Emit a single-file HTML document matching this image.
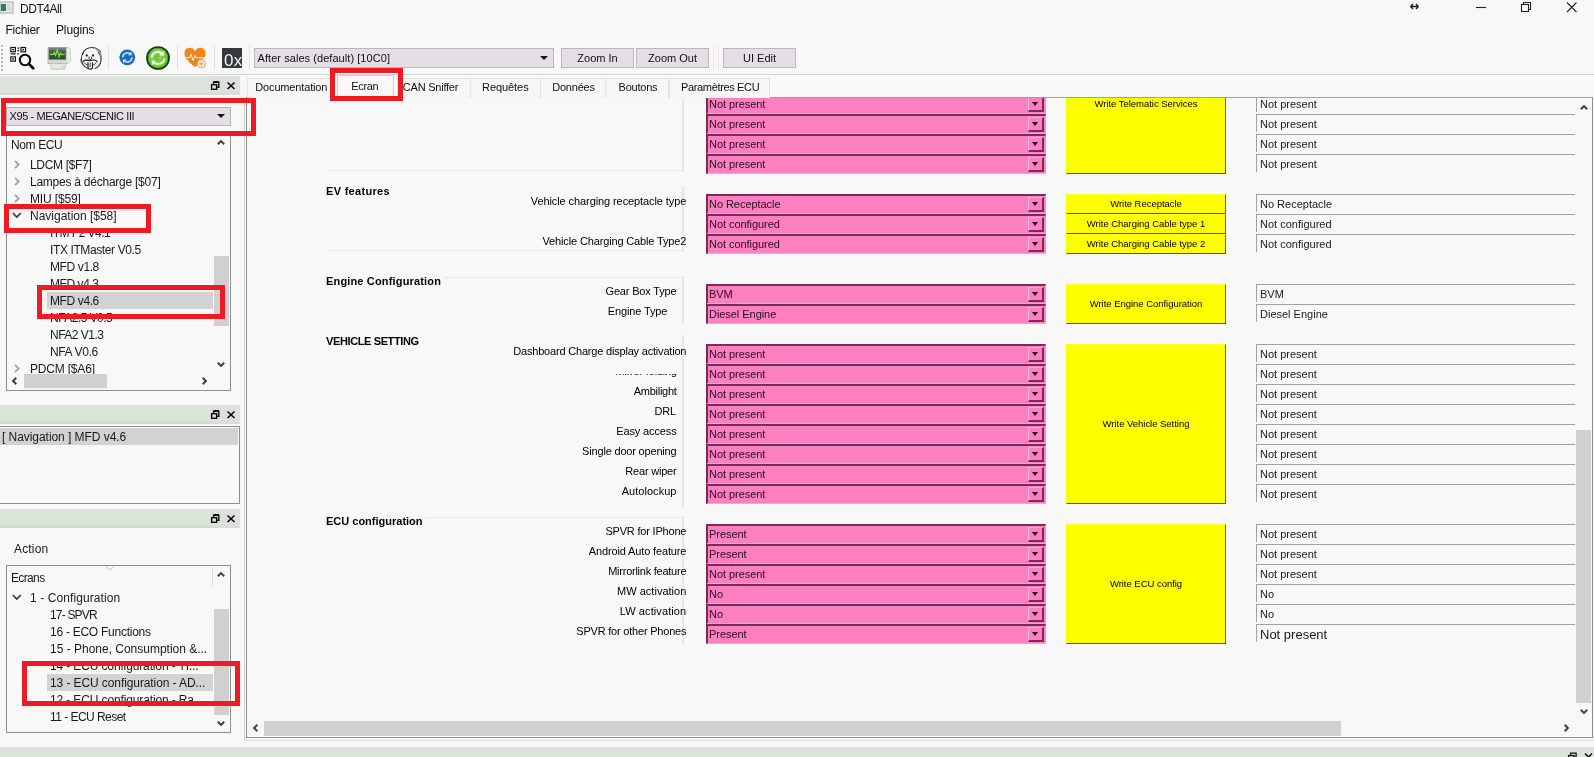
<!DOCTYPE html>
<html lang="fr"><head><meta charset="utf-8"><title>DDT4All</title>
<style>
*{box-sizing:border-box;margin:0;padding:0}
html,body{width:1594px;height:757px;overflow:hidden;background:#f8f8f8}
body{position:relative;font-family:"Liberation Sans",sans-serif;font-size:12px;color:#111;will-change:transform}
.a{position:absolute;white-space:nowrap}
.t{position:absolute;white-space:nowrap;line-height:14px;height:14px}
.ui{font-size:12px;letter-spacing:-0.1px;color:#1a1a1a}
.tab{position:absolute;top:78px;height:20px;border:1px solid #e2e2e2;border-bottom:none;background:#f6f6f6}
.tabt{font-size:11px;color:#111}
.dock{position:absolute;left:0;width:240px;height:19px;background:linear-gradient(90deg,rgba(0,0,0,0) 0 205px,rgba(222,222,222,0.7) 215px 240px),linear-gradient(#dbe4d9 0 16px,#d0d7cf 18px,#d9ded8 19px)}
.pc{position:absolute;left:706px;width:340px;height:20px;background:#ff80c0;border-top:2px solid #7c2a5a;border-left:2px solid #7c2a5a;border-bottom:1px solid #ffa3d3;border-right:1px solid #ff90c8}
.pc span{position:absolute;left:1px;top:1px;font-size:11px;line-height:14px;color:#2a0a1c;letter-spacing:-0.05px}
.pc i{position:absolute;right:1px;top:1px;width:16px;height:15px;border-top:1px solid #ffb8dc;border-left:1px solid #ffb8dc;border-right:2px solid #7c2a5a;border-bottom:2px solid #7c2a5a;background:#ff80c0}
.pc i:after{content:"";position:absolute;left:3px;top:4px;border-left:3.5px solid transparent;border-right:3.5px solid transparent;border-top:4px solid #200010}
.yb{position:absolute;left:1066px;width:160px;background:#ffff00;border-top:1px solid #ffff30;border-left:1px solid #ffff00;border-right:1px solid #6a6a00;border-bottom:1px solid #5a5a00;font-size:9.5px;color:#000;text-align:center;letter-spacing:-0.03px}
.yb span{position:absolute;left:0;right:0;text-align:center;line-height:12px}
.rf{position:absolute;left:1256px;width:319px;height:20px;border-top:1px solid #a2a2a2}
.rf:before{content:"";position:absolute;left:0;top:0;width:1px;height:17px;background:#a2a2a2}
.rf span{position:absolute;left:4px;top:2px;font-size:11px;line-height:14px;color:#1a1a1a}
.lb{position:absolute;font-size:11px;line-height:14px;height:14px;white-space:nowrap;color:#000}
.gh{position:absolute;left:326px;font-size:11px;font-weight:bold;line-height:14px;white-space:nowrap;color:#000;background:#f8f8f8;padding-right:3px}
.gl{position:absolute;background:#e9e4ee}
.red{position:absolute;border:5px solid #ed1c24}
.tv{position:absolute;border:1px solid #8e8e8e;background:#f8f8f8;overflow:hidden}
.sel{position:absolute;background:#d2d2d2}
.sb{position:absolute;background:#d0d0d0}
svg{position:absolute;overflow:visible}
</style></head><body>

<svg style="left:0;top:1px" width="14" height="14" viewBox="0 0 14 14"><rect x="0" y="1" width="13" height="11" fill="#e8ece8" stroke="#9aa" stroke-width="1"/><rect x="1" y="3" width="5" height="7" fill="#3a7a5a"/><rect x="7" y="3" width="4" height="7" fill="#d8dcd8"/></svg>
<div class="t" style="left:20px;top:2px;font-size:12px;color:#111;letter-spacing:-0.453px">DDT4All</div>
<svg style="left:1400px;top:0" width="194" height="16" viewBox="0 0 194 16" fill="none" stroke="#222" stroke-width="1.1"><path d="M10.5 6.5h8M10.5 6.5l2.5-2.5M10.5 6.5l2.500 2.500M18.5 6.500l-2.500-2.500M18.500 6.500l-2.500 2.500" stroke-width="1.4"/><path d="M76 7.5h10"/><rect x="121.500" y="4.500" width="7" height="7"/><path d="M123.500 4.500v-2h7v7h-2"/><path d="M167 2.500l9.500 9.500M176.500 2.500l-9.500 9.500"/></svg>
<div class="t" style="left:5.500px;top:23px;font-size:12px;letter-spacing:-0.274px">Fichier</div>
<div class="t" style="left:56px;top:23px;font-size:12px;letter-spacing:-0.137px">Plugins</div>
<div class="a" style="left:1px;top:45px;width:2px;height:26px;background:repeating-linear-gradient(#b4b4b4 0 2px,transparent 2px 4px)"></div>
<svg style="left:9px;top:45px" width="27" height="26" viewBox="0 0 27 26"><g fill="none" stroke="#111" stroke-width="1.150"><rect x="1.800" y="2.500" width="4.600" height="4.300"/><rect x="12" y="2.500" width="4.600" height="4.300"/><rect x="1.800" y="11.900" width="4.600" height="4.300"/></g><g fill="#111"><rect x="3.300" y="3.900" width="1.600" height="1.500"/><rect x="13.500" y="3.900" width="1.600" height="1.500"/><rect x="3.300" y="13.300" width="1.600" height="1.500"/><rect x="8.600" y="2.400" width="1.500" height="1.400"/><rect x="8.600" y="4.800" width="1.500" height="1.600"/><rect x="1.600" y="8.300" width="5" height="1.200"/><rect x="8.200" y="8.300" width="1.600" height="1.200"/></g><circle cx="16" cy="15" r="5.200" fill="#f8f8f8" stroke="#0a0a0a" stroke-width="2"/><path d="M20 19l4.200 4.200" stroke="#0a0a0a" stroke-width="2.700" stroke-linecap="round"/></svg>
<svg style="left:47px;top:46px" width="25" height="24" viewBox="0 0 25 24"><defs><linearGradient id="scr" x1="0" y1="0" x2="0" y2="1"><stop offset="0" stop-color="#8a8f8a"/><stop offset="0.350" stop-color="#3c5a3c"/><stop offset="1" stop-color="#2c4a30"/></linearGradient></defs><path d="M1 1.500h19.500l3 1.500v12l-3 2.500h-19.500z" fill="#d4d7d4" stroke="#a0a3a0" stroke-width="0.700"/><path d="M20 1.500l3.500 1.500v12l-3.500 2.500z" fill="#e9ebe9"/><rect x="2" y="2" width="16.800" height="11.300" fill="url(#scr)" stroke="#6a6e6a" stroke-width="0.700"/><path d="M3 8.300h3l1.200-1.800 1.300 2.800 1.800-5.300 1.700 6.800 1.400-3.800 1 1.300h3.400" fill="none" stroke="#7fe34a" stroke-width="1.200"/><path d="M3.500 17.500h15.500l-1 5.800h-13.500z" fill="#e6e8e6" stroke="#b4b7b4" stroke-width="0.700"/><path d="M15 23.300l3-3.300h-3z" fill="#cfd2cf"/></svg>
<svg style="left:79px;top:46px" width="25" height="25" viewBox="0 0 25 25" fill="none" stroke="#2a2a2a" stroke-width="1.100" stroke-linecap="round"><path d="M4.500 6.500c-2.500 3.500-2.800 8.500-0.500 12 1.500 2.300 3.500 3.500 5 4"/><path d="M16 22.500c3-1 5.500-4 6-8 0.300-3-0.500-6-2.500-8"/><path d="M3.500 8c1.500-4 5.500-6.500 9.500-6.500 3.500 0 6.500 1.500 8.500 4.500" stroke="#333"/><path d="M14 2c3 0 6 2 8 5.500M17 3.500c2.500 1.500 4.500 4.500 5 7.500M1.500 13c0 2 0.500 4 1.500 5.500M19.500 5c2 2 3.500 5 3.500 8" stroke="#8a8a8a" stroke-width="0.900"/><circle cx="7.700" cy="9.500" r="1.150" fill="#222" stroke="none"/><circle cx="14" cy="9.500" r="1.150" fill="#222" stroke="none"/><path d="M10 11c-0.500 1.500 0.500 2.500 1.300 2.500s1.800-1 1.200-2.500" stroke-width="1"/><path d="M4 15.500c1.500-1.500 3.500-1.800 5.500-1.200 1 0.300 1.500 0.300 2.500 0 2-0.600 4.500-0.300 6 1.200" stroke-width="1.300"/><path d="M5.500 17c1 1.500 2.500 2 3.500 2M17 17c-1 1.500-2 2-3 2" stroke-width="1"/><path d="M9 16.500v4.500c0 2.800 4.500 2.800 4.500 0v-4.500" stroke-width="1.200"/><path d="M11.200 17v3.500" stroke-width="0.900"/></svg>
<div class="a" style="left:108px;top:46px;width:1px;height:24px;background:#e4e0e6"></div>
<svg style="left:119px;top:49px" width="17" height="17" viewBox="0 0 17 17"><circle cx="8.300" cy="8.300" r="7.900" fill="#1a6cc4"/><path d="M3.700 8.300a4.600 4.600 0 0 1 8-3M12.900 8.500a4.600 4.600 0 0 1-8 3" fill="none" stroke="#cfe9ff" stroke-width="1.500"/><path d="M12.600 2.600v3.600h-3.600zM4 14.200v-3.600h3.600z" fill="#cfe9ff"/></svg>
<svg style="left:146px;top:46px" width="24" height="24" viewBox="0 0 24 24"><defs><radialGradient id="gg" cx="0.450" cy="0.350" r="0.750"><stop offset="0" stop-color="#a4e070"/><stop offset="0.550" stop-color="#6cc83a"/><stop offset="1" stop-color="#8fd830"/></radialGradient></defs><circle cx="12" cy="12" r="11" fill="url(#gg)" stroke="#123808" stroke-width="1.700"/><circle cx="12" cy="12" r="9.600" fill="none" stroke="#4aa52a" stroke-width="1"/><path d="M5.500 11.500a6.500 6.500 0 0 1 11-3.500M18.500 12.500a6.500 6.500 0 0 1-11 3.500" fill="none" stroke="#f2ffe6" stroke-width="2"/><path d="M18.200 4.500v5h-5zM5.800 19.500v-5h5z" fill="#f2ffe6"/><path d="M8 10c1-2 3-3 5-2.500l1 3-2 1 1 2.500-3 2c-1.500-1-2.500-3.500-2-6z" fill="#6ac030" opacity="0.850"/></svg>
<div class="a" style="left:177px;top:46px;width:1px;height:24px;background:#e4e0e6"></div>
<svg style="left:184px;top:48px" width="23" height="21" viewBox="0 0 23 21"><path d="M11 19C4 13.500 0.500 10 0.500 6a5 5 0 0 1 10.500-2 5 5 0 0 1 10.500 2c0 4-3.500 7.500-10.500 13z" fill="#f08418"/><path d="M1 9.800h4.500l1.500-3.800 2 6.500 2-5 1 2.300h8.500" fill="none" stroke="#fff" stroke-width="1"/><circle cx="17.300" cy="15.800" r="4" fill="#fbeee0" stroke="#f2a55c" stroke-width="1.100"/><path d="M15 15.800h4.600M17.300 13.500v4.600" stroke="#f09a48" stroke-width="1.100"/></svg>
<div class="a" style="left:214px;top:46px;width:1px;height:24px;background:#e4e0e6"></div>
<div class="a" style="left:222px;top:48px;width:20px;height:20px;background:#343a3c;overflow:hidden"><span class="a" style="left:2px;top:4px;font-size:17px;line-height:18px;color:#f4f4f4;letter-spacing:0.3px">0x</span></div>
<div class="a" style="left:249px;top:46px;width:1px;height:24px;background:#e2e2e2"></div>
<div class="a" style="left:254px;top:48px;width:300px;height:20px;background:#e4dfe4;border:1px solid #b9b5b9"></div>
<div class="t" style="left:257.500px;top:51px;font-size:11px;letter-spacing:0.059px;color:#111">After sales (default) [10C0]</div>
<div class="a" style="left:540px;top:56px;border-left:4px solid transparent;border-right:4px solid transparent;border-top:4px solid #111"></div>
<div class="a" style="left:561px;top:48px;width:73px;height:20px;background:#e4dfe4;border:1px solid #bbb7bb;text-align:center;font-size:11px;line-height:19px;color:#111">Zoom In</div>
<div class="a" style="left:636px;top:48px;width:73px;height:20px;background:#e4dfe4;border:1px solid #bbb7bb;text-align:center;font-size:11px;line-height:19px;color:#111">Zoom Out</div>
<div class="a" style="left:723px;top:48px;width:73px;height:20px;background:#e4dfe4;border:1px solid #bbb7bb;text-align:center;font-size:11px;line-height:19px;color:#111">UI Edit</div>
<div class="a" style="left:713px;top:46px;width:1px;height:24px;background:#e8e4ea"></div>
<div class="a" style="left:718px;top:46px;width:1px;height:24px;background:#ebe8ee"></div>
<div class="a" style="left:0;top:74px;width:1594px;height:1px;background:#cfd3cf"></div>
<div class="dock" style="top:76px"></div>
<svg style="left:210px;top:80px" width="28" height="12" viewBox="0 0 28 12" fill="none" stroke="#0a0a0a" stroke-width="1.400"><rect x="1.600" y="4.700" width="5" height="4.600" fill="#dde3db"/><path d="M3.600 4.500v-2.300h5.200v5h-1.700" /><path d="M3.600 2h5.200" stroke-width="2"/><path d="M17.500 2.500l7 6.500M24.500 2.500l-7 6.500" stroke-width="1.600"/></svg>
<div class="a" style="left:6px;top:107px;width:225px;height:19px;background:#e4dfe4;border:1px solid #b4b0b4"></div>
<div class="t" style="left:9.500px;top:109px;font-size:11px;letter-spacing:-0.395px;color:#111">X95 - MEGANE/SCENIC III</div>
<div class="a" style="left:217px;top:114px;border-left:4px solid transparent;border-right:4px solid transparent;border-top:4px solid #111"></div>
<div class="tv" style="left:6px;top:135px;width:225px;height:256px"></div>
<div class="t ui" style="left:11px;top:138px;letter-spacing:-0.374px">Nom ECU</div>
<svg style="left:14px;top:160px" width="6" height="9" viewBox="0 0 6 9"><path d="M1 0.800l3.700 3.700-3.700 3.700" fill="none" stroke="#a2a2a2" stroke-width="1.800"/></svg>
<div class="t ui" style="left:30px;top:158px;letter-spacing:-0.319px">LDCM [$F7]</div>
<svg style="left:14px;top:177px" width="6" height="9" viewBox="0 0 6 9"><path d="M1 0.800l3.700 3.700-3.700 3.700" fill="none" stroke="#a2a2a2" stroke-width="1.800"/></svg>
<div class="t ui" style="left:30px;top:175px;letter-spacing:-0.244px">Lampes à décharge [$07]</div>
<svg style="left:14px;top:194px" width="6" height="9" viewBox="0 0 6 9"><path d="M1 0.800l3.700 3.700-3.700 3.700" fill="none" stroke="#a2a2a2" stroke-width="1.800"/></svg>
<div class="t ui" style="left:30px;top:192px;letter-spacing:-0.148px">MIU [$59]</div>
<svg style="left:12px;top:212px" width="10" height="7" viewBox="0 0 10 7"><path d="M0.800 1l4 4 4-4" fill="none" stroke="#333" stroke-width="1.600"/></svg>
<div class="t ui" style="left:30px;top:209px;letter-spacing:-0.008px">Navigation [$58]</div>
<div class="t ui" style="left:50px;top:226px;letter-spacing:-0.53px">ITM F2 V4.1</div>
<div class="t ui" style="left:50px;top:243px;letter-spacing:-0.386px">ITX ITMaster V0.5</div>
<div class="t ui" style="left:50px;top:260px;letter-spacing:-0.389px">MFD v1.8</div>
<div class="t ui" style="left:50px;top:277px;letter-spacing:-0.427px">MFD v4.3</div>
<div class="sel" style="left:47px;top:292px;width:166px;height:17px"></div>
<div class="t ui" style="left:50px;top:294px;letter-spacing:-0.389px">MFD v4.6</div>
<div class="t ui" style="left:50px;top:311px;letter-spacing:-0.532px">NFA2.5 V0.5</div>
<div class="t ui" style="left:50px;top:328px;letter-spacing:-0.515px">NFA2 V1.3</div>
<div class="t ui" style="left:50px;top:345px;letter-spacing:-0.375px">NFA V0.6</div>
<svg style="left:14px;top:364px" width="6" height="9" viewBox="0 0 6 9"><path d="M1 0.800l3.700 3.700-3.700 3.700" fill="none" stroke="#a2a2a2" stroke-width="1.800"/></svg>
<div class="t ui" style="left:30px;top:362px;letter-spacing:-0.189px;height:12px;overflow:hidden">PDCM [$A6]</div>
<svg style="left:216px;top:139px" width="10" height="7" viewBox="0 0 10 7"><path d="M1.800 5.300l3.200-3.200 3.200 3.200" fill="none" stroke="#3c4044" stroke-width="2"/></svg>
<svg style="left:216px;top:361px" width="10" height="7" viewBox="0 0 10 7"><path d="M1.800 1.700l3.200 3.200 3.200-3.200" fill="none" stroke="#3c4044" stroke-width="2"/></svg>
<div class="sb" style="left:214px;top:256px;width:15px;height:70px"></div>
<div class="a" style="left:7px;top:374px;width:207px;height:16px;background:#f8f8f8"></div>
<div class="sb" style="left:24px;top:374px;width:83px;height:14px"></div>
<svg style="left:11px;top:376px" width="7" height="10" viewBox="0 0 7 10"><path d="M5.300 1.800l-3.200 3.200 3.200 3.200" fill="none" stroke="#3c4044" stroke-width="2"/></svg>
<svg style="left:201px;top:376px" width="7" height="10" viewBox="0 0 7 10"><path d="M1.700 1.800l3.200 3.200-3.200 3.200" fill="none" stroke="#3c4044" stroke-width="2"/></svg>
<div class="dock" style="top:405px"></div>
<svg style="left:210px;top:409px" width="28" height="12" viewBox="0 0 28 12" fill="none" stroke="#0a0a0a" stroke-width="1.400"><rect x="1.600" y="4.700" width="5" height="4.600" fill="#dde3db"/><path d="M3.600 4.500v-2.300h5.200v5h-1.700" /><path d="M3.600 2h5.200" stroke-width="2"/><path d="M17.500 2.500l7 6.500M24.500 2.500l-7 6.500" stroke-width="1.600"/></svg>
<div class="tv" style="left:-1px;top:426px;width:241px;height:78px"></div>
<div class="sel" style="left:0;top:428px;width:238px;height:17px"></div>
<div class="t ui" style="left:2px;top:430px;letter-spacing:-0.052px">[ Navigation ] MFD v4.6</div>
<div class="dock" style="top:509px"></div>
<svg style="left:210px;top:513px" width="28" height="12" viewBox="0 0 28 12" fill="none" stroke="#0a0a0a" stroke-width="1.400"><rect x="1.600" y="4.700" width="5" height="4.600" fill="#dde3db"/><path d="M3.600 4.500v-2.300h5.200v5h-1.700" /><path d="M3.600 2h5.200" stroke-width="2"/><path d="M17.500 2.500l7 6.500M24.500 2.500l-7 6.500" stroke-width="1.600"/></svg>
<div class="t ui" style="left:14px;top:542px;letter-spacing:0.173px">Action</div>
<div class="tv" style="left:6px;top:565px;width:225px;height:168px"></div>
<svg style="left:105px;top:566px" width="10" height="5" viewBox="0 0 10 5"><path d="M1 0.500l4 3.500 4-3.500" fill="none" stroke="#bbb" stroke-width="1"/></svg>
<div class="t ui" style="left:11px;top:571px;letter-spacing:-0.643px">Ecrans</div>
<div class="a" style="left:212px;top:567px;width:1px;height:20px;background:#dedede"></div>
<svg style="left:12px;top:594px" width="10" height="7" viewBox="0 0 10 7"><path d="M0.800 1l4 4 4-4" fill="none" stroke="#333" stroke-width="1.600"/></svg>
<div class="t ui" style="left:30px;top:591px;letter-spacing:0.093px">1 - Configuration</div>
<div class="t ui" style="left:50px;top:608px;letter-spacing:-0.82px">17- SPVR</div>
<div class="t ui" style="left:50px;top:625px;letter-spacing:-0.26px">16 - ECO Functions</div>
<div class="t ui" style="left:50px;top:642px;letter-spacing:-0.008px">15 - Phone, Consumption &amp;...</div>
<div class="t ui" style="left:50px;top:659px;letter-spacing:-0.134px">14 - ECU configuration - TI...</div>
<div class="sel" style="left:47px;top:674px;width:166px;height:17px"></div>
<div class="t ui" style="left:50px;top:676px;letter-spacing:-0.093px">13 - ECU configuration - AD...</div>
<div class="t ui" style="left:50px;top:693px;letter-spacing:-0.13px">12 - ECU configuration - Ra...</div>
<div class="t ui" style="left:50px;top:710px;letter-spacing:-0.539px">11 - ECU Reset</div>
<svg style="left:216px;top:571px" width="10" height="7" viewBox="0 0 10 7"><path d="M1.800 5.300l3.200-3.200 3.200 3.200" fill="none" stroke="#3c4044" stroke-width="2"/></svg>
<svg style="left:216px;top:720px" width="10" height="7" viewBox="0 0 10 7"><path d="M1.800 1.700l3.200 3.200 3.200-3.200" fill="none" stroke="#3c4044" stroke-width="2"/></svg>
<div class="sb" style="left:214px;top:609px;width:15px;height:106px"></div>
<div class="a" style="left:244px;top:98px;width:1px;height:642px;background:#d2d2d2"></div>
<div class="a" style="left:244px;top:740px;width:1350px;height:1px;background:#dedede"></div>
<div class="a" style="left:246px;top:97px;width:1347px;height:641px;border:1px solid #8e8e8e;border-top-color:#a0a0a0"></div>
<div class="tab" style="left:247px;width:84px"></div>
<div class="t tabt" style="left:255.3px;top:80px;letter-spacing:-0.154px">Documentation</div>
<div class="tab" style="left:397px;width:74px"></div>
<div class="t tabt" style="left:402.8px;top:80px;letter-spacing:-0.225px">CAN Sniffer</div>
<div class="tab" style="left:470px;width:71px"></div>
<div class="t tabt" style="left:482.0px;top:80px;letter-spacing:-0.062px">Requêtes</div>
<div class="tab" style="left:540px;width:66px"></div>
<div class="t tabt" style="left:552.2px;top:80px;letter-spacing:-0.207px">Données</div>
<div class="tab" style="left:605px;width:64px"></div>
<div class="t tabt" style="left:618.5px;top:80px;letter-spacing:-0.211px">Boutons</div>
<div class="tab" style="left:669px;width:101px"></div>
<div class="t tabt" style="left:681.0px;top:80px;letter-spacing:-0.346px">Paramètres ECU</div>
<div class="a" style="left:337px;top:75px;width:57px;height:23px;border:1px solid #d0d0d0;border-bottom:none;background:#f8f8f8"></div>
<div class="t tabt" style="left:351.300px;top:79px;letter-spacing:-0.33px">Ecran</div>
<div class="a" style="left:247px;top:98px;width:1329px;height:621px;overflow:hidden">
<div class="a" style="left:-247px;top:-98px;width:1594px;height:757px">
<div class="gl" style="left:327px;top:170px;width:355px;height:1px"></div>
<div class="gl" style="left:682px;top:90px;width:2px;height:82px"></div>
<div class="gl" style="left:682px;top:186px;width:2px;height:66px"></div>
<div class="gl" style="left:327px;top:250px;width:355px;height:1px"></div>
<div class="gl" style="left:441px;top:277px;width:242px;height:1px"></div>
<div class="gl" style="left:682px;top:277px;width:2px;height:46px"></div>
<div class="gl" style="left:682px;top:335px;width:2px;height:172px"></div>
<div class="gl" style="left:425px;top:517px;width:258px;height:1px"></div>
<div class="gl" style="left:682px;top:517px;width:2px;height:128px"></div>
<div class="gh" style="top:184px;letter-spacing:0.3px">EV features</div>
<div class="gh" style="top:274px;letter-spacing:0.16px">Engine Configuration</div>
<div class="gh" style="top:334px;letter-spacing:-0.38px">VEHICLE SETTING</div>
<div class="gh" style="top:514px;letter-spacing:0px">ECU configuration</div>
<div class="pc" style="top:94px"><span>Not present</span><i></i></div>
<div class="rf" style="top:94px"><span>Not present</span></div>
<div class="pc" style="top:114px"><span>Not present</span><i></i></div>
<div class="rf" style="top:114px"><span>Not present</span></div>
<div class="pc" style="top:134px"><span>Not present</span><i></i></div>
<div class="rf" style="top:134px"><span>Not present</span></div>
<div class="pc" style="top:154px"><span>Not present</span><i></i></div>
<div class="rf" style="top:154px"><span>Not present</span></div>
<div class="lb" style="left:530.8px;top:194px;letter-spacing:-0.09px">Vehicle charging receptacle type</div>
<div class="pc" style="top:194px"><span>No Receptacle</span><i></i></div>
<div class="rf" style="top:194px"><span>No Receptacle</span></div>
<div class="pc" style="top:214px"><span>Not configured</span><i></i></div>
<div class="rf" style="top:214px"><span>Not configured</span></div>
<div class="lb" style="left:542.5px;top:234px;letter-spacing:-0.143px">Vehicle Charging Cable Type2</div>
<div class="pc" style="top:234px"><span>Not configured</span><i></i></div>
<div class="rf" style="top:234px"><span>Not configured</span></div>
<div class="lb" style="left:605.5px;top:284px;letter-spacing:-0.167px">Gear Box Type</div>
<div class="pc" style="top:284px"><span>BVM</span><i></i></div>
<div class="rf" style="top:284px"><span>BVM</span></div>
<div class="lb" style="left:607.7px;top:304px;letter-spacing:-0.124px">Engine Type</div>
<div class="pc" style="top:304px"><span>Diesel Engine</span><i></i></div>
<div class="rf" style="top:304px"><span>Diesel Engine</span></div>
<div class="lb" style="left:513.3px;top:344px;letter-spacing:-0.194px">Dashboard Charge display activation</div>
<div class="pc" style="top:344px"><span>Not present</span><i></i></div>
<div class="rf" style="top:344px"><span>Not present</span></div>
<div class="a" style="left:615.4px;top:374px;width:70px;height:5px;overflow:hidden"><div class="lb" style="left:0;top:-10px;letter-spacing:-0.185px">Mirror folding</div></div>
<div class="pc" style="top:364px"><span>Not present</span><i></i></div>
<div class="rf" style="top:364px"><span>Not present</span></div>
<div class="lb" style="left:633.8px;top:384px;letter-spacing:-0.283px">Ambilight</div>
<div class="pc" style="top:384px"><span>Not present</span><i></i></div>
<div class="rf" style="top:384px"><span>Not present</span></div>
<div class="lb" style="left:654.4px;top:404px;letter-spacing:-0.139px">DRL</div>
<div class="pc" style="top:404px"><span>Not present</span><i></i></div>
<div class="rf" style="top:404px"><span>Not present</span></div>
<div class="lb" style="left:616.3px;top:424px;letter-spacing:-0.141px">Easy access</div>
<div class="pc" style="top:424px"><span>Not present</span><i></i></div>
<div class="rf" style="top:424px"><span>Not present</span></div>
<div class="lb" style="left:582.1px;top:444px;letter-spacing:-0.182px">Single door opening</div>
<div class="pc" style="top:444px"><span>Not present</span><i></i></div>
<div class="rf" style="top:444px"><span>Not present</span></div>
<div class="lb" style="left:625.3px;top:464px;letter-spacing:-0.199px">Rear wiper</div>
<div class="pc" style="top:464px"><span>Not present</span><i></i></div>
<div class="rf" style="top:464px"><span>Not present</span></div>
<div class="lb" style="left:621.7px;top:484px;letter-spacing:0.036px">Autolockup</div>
<div class="pc" style="top:484px"><span>Not present</span><i></i></div>
<div class="rf" style="top:484px"><span>Not present</span></div>
<div class="lb" style="left:605.4px;top:524px;letter-spacing:-0.192px">SPVR for IPhone</div>
<div class="pc" style="top:524px"><span>Present</span><i></i></div>
<div class="rf" style="top:524px"><span>Not present</span></div>
<div class="lb" style="left:588.8px;top:544px;letter-spacing:-0.14px">Android Auto feature</div>
<div class="pc" style="top:544px"><span>Present</span><i></i></div>
<div class="rf" style="top:544px"><span>Not present</span></div>
<div class="lb" style="left:608.2px;top:564px;letter-spacing:-0.246px">Mirrorlink feature</div>
<div class="pc" style="top:564px"><span>Not present</span><i></i></div>
<div class="rf" style="top:564px"><span>Not present</span></div>
<div class="lb" style="left:617.1px;top:584px;letter-spacing:0.009px">MW activation</div>
<div class="pc" style="top:584px"><span>No</span><i></i></div>
<div class="rf" style="top:584px"><span>No</span></div>
<div class="lb" style="left:619.8px;top:604px;letter-spacing:0.099px">LW activation</div>
<div class="pc" style="top:604px"><span>No</span><i></i></div>
<div class="rf" style="top:604px"><span>No</span></div>
<div class="lb" style="left:576.3px;top:624px;letter-spacing:-0.207px">SPVR for other Phones</div>
<div class="pc" style="top:624px"><span>Present</span><i></i></div>
<div class="rf" style="top:624px"><span style="font-size:13px;top:3px">Not present</span></div>
<div class="yb" style="top:94px;height:80px"><span style="top:3px">Write Telematic Services</span></div>
<div class="yb" style="top:194px;height:20px"><span style="top:3px">Write Receptacle</span></div>
<div class="yb" style="top:214px;height:20px"><span style="top:3px">Write Charging Cable type 1</span></div>
<div class="yb" style="top:234px;height:20px"><span style="top:3px">Write Charging Cable type 2</span></div>
<div class="yb" style="top:284px;height:40px"><span style="top:13px">Write Engine Configuration</span></div>
<div class="yb" style="top:344px;height:160px"><span style="top:73px">Write Vehicle Setting</span></div>
<div class="yb" style="top:524px;height:120px"><span style="top:53px">Write ECU config</span></div>
</div></div>
<svg style="left:1579px;top:104px" width="10" height="7" viewBox="0 0 10 7"><path d="M1.800 5.300l3.200-3.200 3.200 3.200" fill="none" stroke="#3c4044" stroke-width="2"/></svg>
<svg style="left:1579px;top:708px" width="10" height="7" viewBox="0 0 10 7"><path d="M1.800 1.700l3.200 3.200 3.200-3.200" fill="none" stroke="#3c4044" stroke-width="2"/></svg>
<div class="sb" style="left:1576px;top:430px;width:15px;height:273px"></div>
<div class="sb" style="left:264px;top:721px;width:1077px;height:15px"></div>
<svg style="left:252px;top:723px" width="7" height="10" viewBox="0 0 7 10"><path d="M5.300 1.800l-3.200 3.200 3.200 3.200" fill="none" stroke="#3c4044" stroke-width="2"/></svg>
<svg style="left:1563px;top:723px" width="7" height="10" viewBox="0 0 7 10"><path d="M1.700 1.800l3.200 3.200-3.200 3.200" fill="none" stroke="#3c4044" stroke-width="2"/></svg>
<div class="a" style="left:0;top:747px;width:1594px;height:10px;background:#dbe4d9"></div>
<svg style="left:1567px;top:751px" width="28" height="12" viewBox="0 0 28 12" fill="none" stroke="#111" stroke-width="1.300"><rect x="1.600" y="4.600" width="5.500" height="5.500" fill="#dde3db"/><path d="M3.600 4.600v-2.500h5.500v5.500h-2" /><path d="M18 2.500l7 7M25 2.500l-7 7" stroke-width="1.500"/></svg>
<div class="red" style="left:330px;top:68px;width:73px;height:33px"></div>
<div class="red" style="left:1px;top:98px;width:255px;height:38px"></div>
<div class="red" style="left:4px;top:204px;width:147px;height:29px"></div>
<div class="red" style="left:37px;top:285px;width:188px;height:34px"></div>
<div class="red" style="left:22px;top:661px;width:218px;height:45px"></div>
</body></html>
